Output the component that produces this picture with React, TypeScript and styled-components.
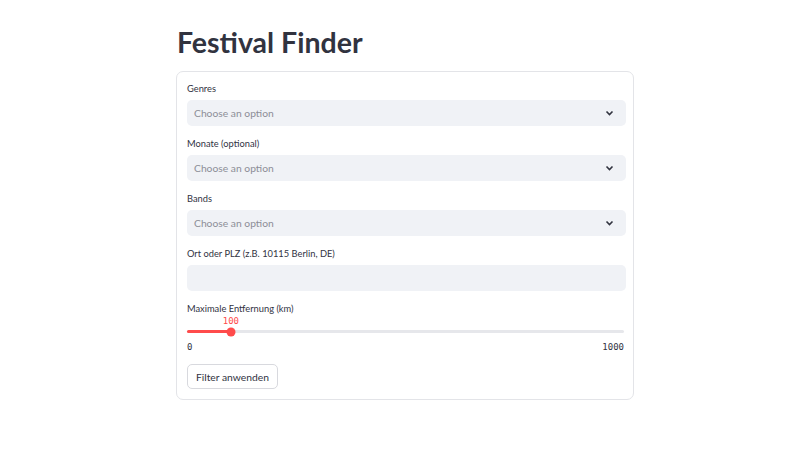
import styled, { createGlobalStyle } from "styled-components";

const Global = createGlobalStyle`
  body {
    margin: 0;
    background: #ffffff;
    font-family: "Lato", "Noto Sans", sans-serif;
    color: #31333f;
  }
`;

const Page = styled.div`
  width: 800px;
  height: 450px;
  display: flex;
  padding-left: 176px;
  box-sizing: border-box;
`;

const Main = styled.div`
  width: 458px;
  padding-top: 24px;
`;

const Title = styled.h1`
  margin: 0 0 11px 1px;
  font-size: 28.5px;
  font-weight: 700;
  line-height: 36px;
  color: #31333f;
`;

const Form = styled.div`
  border: 1px solid #e3e4e8;
  border-radius: 7px;
  padding: 11px 7px 10px 10px;
  display: flex;
  flex-direction: column;
`;

const Field = styled.div`
  display: flex;
  flex-direction: column;
  gap: 5px;
  margin-bottom: 12px;
`;

const Label = styled.label`
  font-size: 9.3px;
  line-height: 12px;
  color: #31333f;
`;

const Box = styled.div`
  height: 26px;
  border-radius: 5px;
  background: #f0f2f6;
  display: flex;
  align-items: center;
  justify-content: space-between;
  padding: 0 12px 0 7px;
  font-size: 10.3px;
  color: #8d8e96;
`;

const Chevron = () => (
  <svg width="9" height="6" viewBox="0 0 9 6">
    <path d="M1.5 1.5 L4.5 4.5 L7.5 1.5" fill="none" stroke="#31333f" strokeWidth="1.6" />
  </svg>
);

const SliderWrap = styled.div`
  display: flex;
  flex-direction: column;
`;

const ValueRow = styled.div`
  position: relative;
  height: 12px;
`;

const Mono = styled.span<{ $red?: boolean }>`
  font-family: "DejaVu Sans Mono", monospace;
  font-size: 9px;
  line-height: 12px;
  color: ${(p) => (p.$red ? "#ff4b4b" : "#31333f")};
`;

const Bubble = styled(Mono)`
  position: absolute;
  top: 0;
  transform: translateX(-50%);
`;

const Track = styled.div`
  position: relative;
  height: 3px;
  margin: 3px 2px 8px 0;
  border-radius: 2px;
  background: #e6e7eb;
`;

const Fill = styled.div`
  height: 100%;
  border-radius: 2px;
  background: #ff4b4b;
`;

const Thumb = styled.div`
  position: absolute;
  top: 50%;
  width: 9px;
  height: 9px;
  border-radius: 50%;
  background: #ff4b4b;
  transform: translate(-50%, -50%);
`;

const Ends = styled.div`
  display: flex;
  justify-content: space-between;
  padding-right: 2px;
`;

const Button = styled.button`
  align-self: flex-start;
  margin-top: 11px;
  height: 25px;
  padding: 0 8px;
  border: 1px solid #d8d9de;
  border-radius: 5px;
  background: #ffffff;
  font-family: inherit;
  font-size: 10.3px;
  color: #31333f;
`;

const SELECTS = ["Genres", "Monate (optional)", "Bands"];

export default function App() {
  const pct = (100 / 1000) * 100;
  return (
    <Page>
      <Global />
      <Main>
        <Title>Festival Finder</Title>
        <Form>
          {SELECTS.map((s) => (
            <Field key={s}>
              <Label>{s}</Label>
              <Box>
                <span>Choose an option</span>
                <Chevron />
              </Box>
            </Field>
          ))}
          <Field>
            <Label>Ort oder PLZ (z.B. 10115 Berlin, DE)</Label>
            <Box />
          </Field>
          <SliderWrap>
            <Label>Maximale Entfernung (km)</Label>
            <ValueRow>
              <Bubble $red style={{ left: `${pct}%` }}>100</Bubble>
            </ValueRow>
            <Track>
              <Fill style={{ width: `${pct}%` }} />
              <Thumb style={{ left: `${pct}%` }} />
            </Track>
            <Ends>
              <Mono>0</Mono>
              <Mono>1000</Mono>
            </Ends>
          </SliderWrap>
          <Button>Filter anwenden</Button>
        </Form>
      </Main>
    </Page>
  );
}
